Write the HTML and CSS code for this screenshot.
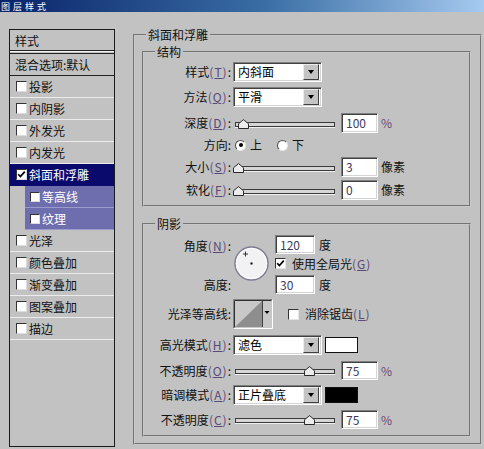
FILE: index.html
```html
<!DOCTYPE html>
<html lang="zh-CN">
<head>
<meta charset="utf-8">
<title>图层样式</title>
<link rel="stylesheet" href="styles.css">
</head>
<body>
<div class="titlebar"><span>图层样式</span></div>
<div class="main">
  <div class="list">
    <div class="hdr">样式</div>
    <div class="dbl"></div>
    <div class="blend">混合选项:默认</div>
    <div class="item"><span class="cb"></span><span>投影</span></div>
    <div class="item"><span class="cb"></span><span>内阴影</span></div>
    <div class="item"><span class="cb"></span><span>外发光</span></div>
    <div class="item"><span class="cb"></span><span>内发光</span></div>
    <div class="item sel"><span class="cb"><svg width="9" height="9" viewBox="0 0 9 9"><path d="M1.2 4.2 L3.4 6.6 L7.8 1.6" fill="none" stroke="#000" stroke-width="1.7"/></svg></span><span>斜面和浮雕</span></div>
    <div class="item sub"><span class="cb"></span><span>等高线</span></div>
    <div class="item sub"><span class="cb"></span><span>纹理</span></div>
    <div class="item"><span class="cb"></span><span>光泽</span></div>
    <div class="item"><span class="cb"></span><span>颜色叠加</span></div>
    <div class="item"><span class="cb"></span><span>渐变叠加</span></div>
    <div class="item"><span class="cb"></span><span>图案叠加</span></div>
    <div class="item"><span class="cb"></span><span>描边</span></div>
  </div>

  <fieldset class="group outer">
    <legend>斜面和浮雕</legend>

    <fieldset class="group inner struct">
      <legend>结构</legend>
      <div class="row r1">
        <div class="lbl">样式<span class="mn">(<u>T</u>)</span>:</div>
        <div class="select"><span class="txt">内斜面</span><span class="ddbtn"></span></div>
      </div>
      <div class="row r2">
        <div class="lbl">方法<span class="mn">(<u>Q</u>)</span>:</div>
        <div class="select"><span class="txt">平滑</span><span class="ddbtn"></span></div>
      </div>
      <div class="row r3">
        <div class="lbl">深度<span class="mn">(<u>D</u>)</span>:</div>
        <div class="slider"><div class="track"></div><div class="range"><svg class="thumb" style="left:5%" width="11" height="10" viewBox="0 0 11 10"><path d="M0.5 9.5 V4.8 L5.5 0.6 L10.5 4.8 V9.5 Z" fill="#ececec" stroke="#2a2a2a"/></svg></div></div>
        <div class="num">100</div><span class="unit pct">%</span>
      </div>
      <div class="row r4">
        <div class="lbl">方向:</div>
        <span class="radio on"></span><span class="rtxt">上</span>
        <span class="radio second"></span><span class="rtxt">下</span>
      </div>
      <div class="row r5">
        <div class="lbl">大小<span class="mn">(<u>S</u>)</span>:</div>
        <div class="slider"><div class="track"></div><div class="range"><svg class="thumb" style="left:0%" width="11" height="10" viewBox="0 0 11 10"><path d="M0.5 9.5 V4.8 L5.5 0.6 L10.5 4.8 V9.5 Z" fill="#ececec" stroke="#2a2a2a"/></svg></div></div>
        <div class="num">3</div><span class="unit">像素</span>
      </div>
      <div class="row r6">
        <div class="lbl">软化<span class="mn">(<u>F</u>)</span>:</div>
        <div class="slider"><div class="track"></div><div class="range"><svg class="thumb" style="left:0%" width="11" height="10" viewBox="0 0 11 10"><path d="M0.5 9.5 V4.8 L5.5 0.6 L10.5 4.8 V9.5 Z" fill="#ececec" stroke="#2a2a2a"/></svg></div></div>
        <div class="num">0</div><span class="unit">像素</span>
      </div>
    </fieldset>

    <fieldset class="group inner shade">
      <legend>阴影</legend>
      <div class="anglegrid">
        <div class="lbl g-l1">角度<span class="mn">(<u>N</u>)</span>:</div>
        <svg class="dial" width="35" height="35" viewBox="0 0 35 35">
          <circle cx="17.5" cy="17.5" r="16.5" fill="#f2f2f4" stroke="#7c7c92" stroke-width="1.4"/>
          <circle cx="17.5" cy="17.5" r="15.2" fill="none" stroke="#ffffff" stroke-width="1"/>
          <path d="M11.5 5.5 V10.5 M9 8 H14" stroke="#333" stroke-width="1"/>
          <rect x="16.5" y="16.5" width="2" height="2" fill="#000"/>
        </svg>
        <div class="g-c1"><div class="num s">120</div><span class="unit deg">度</span></div>
        <div class="g-c2"><span class="cb2"><svg width="9" height="9" viewBox="0 0 9 9"><path d="M1.2 4.2 L3.4 6.6 L7.8 1.6" fill="none" stroke="#000" stroke-width="1.7"/></svg></span><span class="cbtxt">使用全局光<span class="mn">(<u>G</u>)</span></span></div>
        <div class="lbl g-l3">高度:</div>
        <div class="g-c3"><div class="num s">30</div><span class="unit deg">度</span></div>
      </div>
      <div class="row c-row">
        <div class="lbl">光泽等高线:</div>
        <svg class="contour" width="40" height="30" viewBox="0 0 40 30">
          <rect x="0" y="0" width="40" height="30" fill="#c8c8c8"/>
          <polygon points="2,28 29,2 29,28" fill="#8e8e8e"/>
          <line x1="29.5" y1="2" x2="29.5" y2="28" stroke="#404040"/>
          <polygon points="31.5,12 36.5,12 34,15" fill="#000"/>
          <path d="M0.5 29.5 V0.5 H39.5" fill="none" stroke="#808080"/>
          <path d="M1.5 28.5 V1.5 H38.5" fill="none" stroke="#303030"/>
          <path d="M0.5 29.5 H39.5 V0.5" fill="none" stroke="#ffffff"/>
        </svg>
        <span class="cb2 aa"></span><span class="cbtxt">消除锯齿<span class="mn">(<u>L</u>)</span></span>
      </div>
      <div class="row h1">
        <div class="lbl">高光模式<span class="mn">(<u>H</u>)</span>:</div>
        <div class="select"><span class="txt">滤色</span><span class="ddbtn"></span></div>
        <span class="swatch white"></span>
      </div>
      <div class="row h2">
        <div class="lbl">不透明度<span class="mn">(<u>O</u>)</span>:</div>
        <div class="slider"><div class="track"></div><div class="range"><svg class="thumb" style="left:75%" width="11" height="10" viewBox="0 0 11 10"><path d="M0.5 9.5 V4.8 L5.5 0.6 L10.5 4.8 V9.5 Z" fill="#ececec" stroke="#2a2a2a"/></svg></div></div>
        <div class="num s">75</div><span class="unit pct">%</span>
      </div>
      <div class="row h3">
        <div class="lbl">暗调模式<span class="mn">(<u>A</u>)</span>:</div>
        <div class="select"><span class="txt">正片叠底</span><span class="ddbtn"></span></div>
        <span class="swatch black"></span>
      </div>
      <div class="row h4">
        <div class="lbl">不透明度<span class="mn">(<u>C</u>)</span>:</div>
        <div class="slider"><div class="track"></div><div class="range"><svg class="thumb" style="left:75%" width="11" height="10" viewBox="0 0 11 10"><path d="M0.5 9.5 V4.8 L5.5 0.6 L10.5 4.8 V9.5 Z" fill="#ececec" stroke="#2a2a2a"/></svg></div></div>
        <div class="num s">75</div><span class="unit pct">%</span>
      </div>
    </fieldset>
  </fieldset>
</div>
</body>
</html>
```

FILE: styles.css
```css
* { box-sizing: border-box; }
html, body { margin: 0; padding: 0; }
body {
  width: 484px;
  height: 449px;
  overflow: hidden;
  background: #c2c2c2;
  font-family: "Noto Sans CJK SC", "Noto Sans", sans-serif;
  font-size: 12px;
  color: #111;
}

/* title bar */
.titlebar {
  height: 12px;
  padding-top: 2px;
  background: linear-gradient(90deg, #0a246a 0%, #3a6ea5 55%, #a6caf0 100%);
  color: #fff;
}
.titlebar span {
  display: block;
  font-size: 9px;
  line-height: 10px;
  letter-spacing: 3px;
  padding-left: 1px;
}

.main {
  display: flex;
  align-items: flex-start;
  padding-top: 15px;
}

/* left style list */
.list {
  margin-left: 9px;
  margin-top: 2px;
  width: 106px;
  height: 418px;
  border: 1px solid #1a1a1a;
  flex: none;
}
.hdr {
  height: 21px;
  line-height: 21px;
  padding-left: 5px;
  border-bottom: 1px solid #222;
}
.dbl {
  height: 3px;
  border-top: 1px solid #f4f4f4;
  border-bottom: 1px solid #222;
}
.blend {
  height: 22px;
  line-height: 21px;
  padding-left: 5px;
  border-bottom: 1px solid #222;
}
.item {
  height: 22px;
  display: flex;
  align-items: center;
  gap: 2px;
  padding-left: 6px;
  border-bottom: 1px solid #ececec;
}
.item.sel {
  background: #0a0a6c;
  color: #fff;
  border-bottom-color: #0a0a6c;
}
.item.sub {
  margin-left: 15px;
  padding-left: 5px;
  background: #6e6eae;
  color: #fff;
  border-bottom-color: #9a9acc;
}
.cb {
  width: 11px;
  height: 11px;
  flex: none;
  background: #fff;
  border-style: solid;
  border-width: 1px;
  border-color: #333 #dcdcdc #dcdcdc #333;
  display: flex;
  align-items: center;
  justify-content: center;
}
.item.sub .cb { width: 10px; height: 10px; }

/* group boxes */
.group {
  margin: 0;
  padding: 0;
  min-width: 0;
  border: 2px groove #c8c8c8;
}
.group > legend {
  padding: 0 2px;
  margin-left: 11px;
  line-height: 16px;
}
.outer {
  margin-left: 18px;
  width: 349px;
  padding: 0 0 6px 0;
}
.inner {
  margin-left: 7px;
  width: 329px;
}
.struct { margin-top: 1px; padding: 0 0 5px 0; }
.shade { margin-top: 9px; padding: 0 0 6px 0; }

/* rows */
.row {
  display: flex;
  align-items: center;
  height: 20px;
  line-height: 20px;
}
.lbl {
  width: 87px;
  flex: none;
  text-align: right;
  white-space: nowrap;
}
.mn { color: #5a4878; letter-spacing: 1px; }
.mn u { text-decoration-thickness: 1px; text-underline-offset: 1px; }

.r1 { margin-top: 2px; }
.r2 { margin-top: 5px; }
.r3 { margin-top: 6px; }
.r4 { margin-top: 2px; }
.r5 { margin-top: 2px; }
.r6 { margin-top: 3px; }

/* select */
.select {
  margin-left: 2px;
  width: 89px;
  height: 20px;
  flex: none;
  display: flex;
  align-items: center;
  background: #fff;
  border: 1px solid;
  border-color: #808080 #fff #fff #808080;
  box-shadow: inset 1px 1px 0 #404040, inset -1px -1px 0 #d4d4d4;
  padding: 1px 2px 1px 4px;
  line-height: 16px;
  color: #000;
}
.select .txt { flex: 1; }
.ddbtn {
  width: 16px;
  height: 16px;
  flex: none;
  background: #c4c4c4;
  border: 1px solid;
  border-color: #ececec #404040 #404040 #ececec;
  display: flex;
  align-items: center;
  justify-content: center;
}
.ddbtn::after {
  content: "";
  border-left: 3.5px solid transparent;
  border-right: 3.5px solid transparent;
  border-top: 4px solid #000;
}

/* slider */
.slider {
  position: relative;
  margin-left: 4px;
  width: 100px;
  height: 19px;
  flex: none;
}
.track {
  position: absolute;
  left: 0;
  right: 0;
  top: 8px;
  height: 5px;
  background: #d6d6d6;
  border: 1px solid #3a3a3a;
  box-shadow: 0 1px 0 #f0f0f0;
}
.range {
  position: absolute;
  left: 3px;
  right: 2px;
  top: 0;
  bottom: 0;
}
.thumb {
  position: absolute;
  top: 5px;
  margin-left: -5px;
  display: block;
}

/* numeric fields */
.num {
  margin-left: 6px;
  width: 37px;
  height: 20px;
  flex: none;
  background: #fff;
  border: 1px solid;
  border-color: #808080 #fff #fff #808080;
  box-shadow: inset 1px 1px 0 #404040, inset -1px -1px 0 #d4d4d4;
  padding-left: 4px;
  line-height: 18px;
  color: #3c3c5c;
}
.num.s { height: 19px; line-height: 17px; }
.unit { margin-left: 3px; }
.unit.pct { color: #6a4a72; }

/* radios */
.radio {
  width: 11px;
  height: 11px;
  flex: none;
  margin-left: 4px;
  border-radius: 50%;
  background: #fff;
  border: 1px solid;
  border-color: #505050 #e8e8e8 #e8e8e8 #505050;
  display: flex;
  align-items: center;
  justify-content: center;
}
.radio.on::after {
  content: "";
  width: 4px;
  height: 4px;
  border-radius: 50%;
  background: #000;
}
.radio.second { margin-left: 15px; }
.rtxt { margin-left: 4px; }

/* angle block */
.anglegrid {
  display: grid;
  grid-template-columns: 87px 40px auto;
  grid-template-rows: 21px 19px 19px;
  column-gap: 2px;
  margin-top: 3px;
}
.g-l1 { grid-column: 1; grid-row: 1; line-height: 21px; }
.g-l3 { grid-column: 1; grid-row: 3; line-height: 19px; }
.dial { grid-column: 2; grid-row: 1 / 4; margin-top: 11px; margin-left: 1px; display: block; }
.g-c1, .g-c3 { display: flex; align-items: flex-start; line-height: 19px; }
.g-c1 { grid-column: 3; grid-row: 1; }
.g-c3 { grid-column: 3; grid-row: 3; }
.g-c1 .num, .g-c3 .num { margin-left: 0; width: 40px; }
.deg { margin-left: 4px; }
.g-c2 {
  grid-column: 3;
  grid-row: 2;
  display: flex;
  align-items: flex-start;
  line-height: 15px;
}
.cb2 {
  width: 11px;
  height: 11px;
  flex: none;
  margin-top: 2px;
  background: #fff;
  border-style: solid;
  border-width: 1px;
  border-color: #333 #e4e4e4 #e4e4e4 #333;
  display: flex;
  align-items: center;
  justify-content: center;
}
.cbtxt { margin-left: 6px; white-space: nowrap; }

/* contour row */
.c-row { margin-top: 5px; height: 30px; }
.contour { margin-left: 2px; display: block; flex: none; }
.cb2.aa { margin-left: 15px; margin-top: 0; }

.h1 { margin-top: 6px; }
.h2 { margin-top: 6px; height: 19px; }
.h3 { margin-top: 5px; }
.h4 { margin-top: 5px; height: 19px; }
.h2 .num, .h4 .num { margin-left: 6px; }

.swatch {
  margin-left: 3px;
  width: 33px;
  height: 16px;
  flex: none;
  border: 1px solid #111;
}
.swatch.white { background: #fff; }
.swatch.black { background: #000; }
```
